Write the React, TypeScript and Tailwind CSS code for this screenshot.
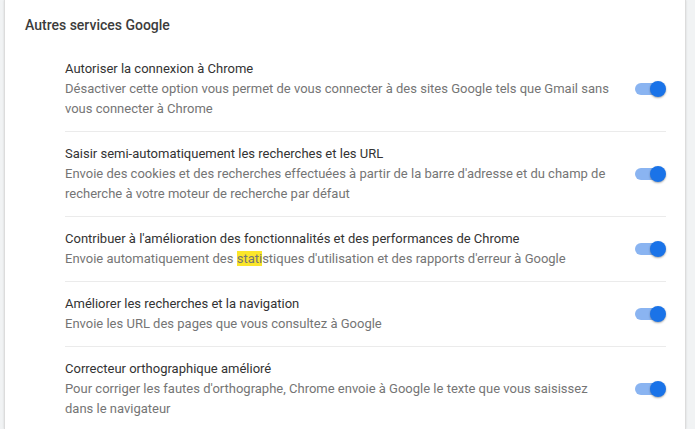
import React from 'react';

interface SettingRow {
  title: string;
  desc: React.ReactNode;
}

const rows: SettingRow[] = [
  {
    title: 'Autoriser la connexion à Chrome',
    desc: 'Désactiver cette option vous permet de vous connecter à des sites Google tels que Gmail sans vous connecter à Chrome',
  },
  {
    title: 'Saisir semi-automatiquement les recherches et les URL',
    desc: "Envoie des cookies et des recherches effectuées à partir de la barre d'adresse et du champ de recherche à votre moteur de recherche par défaut",
  },
  {
    title: "Contribuer à l'amélioration des fonctionnalités et des performances de Chrome",
    desc: (
      <>
        Envoie automatiquement des <span className="bg-[#fbe62a]">stati</span>stiques d'utilisation et des rapports d'erreur à Google
      </>
    ),
  },
  {
    title: 'Améliorer les recherches et la navigation',
    desc: 'Envoie les URL des pages que vous consultez à Google',
  },
  {
    title: 'Correcteur orthographique amélioré',
    desc: "Pour corriger les fautes d'orthographe, Chrome envoie à Google le texte que vous saisissez dans le navigateur",
  },
];

const Toggle: React.FC = () => (
  <div className="relative w-[31px] h-[16px] shrink-0">
    <div className="absolute left-0 top-[2px] w-[28px] h-[12px] rounded-full bg-[#8ab4f1]" />
    <div className="absolute right-0 top-0 w-[16px] h-[16px] rounded-full bg-[#1a73e8] shadow-[0_1px_2px_rgba(0,0,0,0.35)]" />
  </div>
);

export default function App() {
  return (
    <div
      className="w-[695px] h-[429px] overflow-hidden bg-[#f1f3f4] pl-[4px] pr-[9px]"
      style={{ fontFamily: 'Roboto, "Liberation Sans", sans-serif' }}
    >
      <div className="h-full bg-white border-x border-[#dcdcdc] shadow-[0_0_2px_rgba(0,0,0,0.12)]">
        <h2 className="pt-[15px] pl-[20px] text-[14px] leading-[20px] font-medium text-[#3c3c3c]">
          Autres services Google
        </h2>

        <div className="mt-[12px] ml-[60px] mr-[19px]">
          {rows.map((row, i) => (
            <div
              key={i}
              className={`flex items-center py-3 ${i > 0 ? 'border-t border-[#ebebeb]' : ''}`}
            >
              <div className="flex-1 pr-[20px] text-[13px] leading-[20px]">
                <div className="text-[#333333]">{row.title}</div>
                <div className="text-[#757575]">{row.desc}</div>
              </div>
              <Toggle />
            </div>
          ))}
        </div>
      </div>
    </div>
  );
}
